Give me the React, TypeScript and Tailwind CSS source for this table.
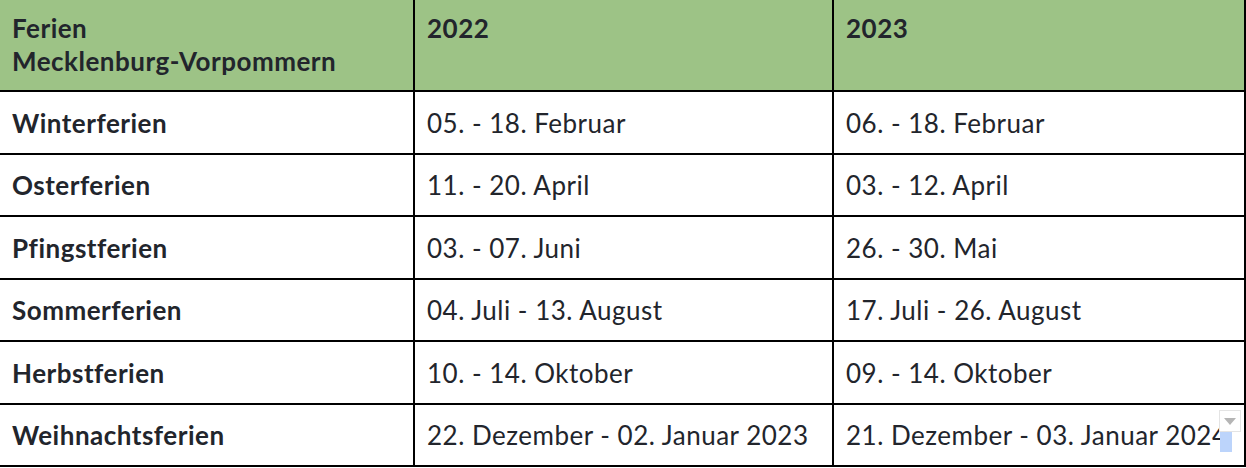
import React from 'react';

const rows = [
  { name: 'Winterferien', y2022: '05. - 18. Februar', y2023: '06. - 18. Februar' },
  { name: 'Osterferien', y2022: '11. - 20. April', y2023: '03. - 12. April' },
  { name: 'Pfingstferien', y2022: '03. - 07. Juni', y2023: '26. - 30. Mai' },
  { name: 'Sommerferien', y2022: '04. Juli - 13. August', y2023: '17. Juli - 26. August' },
  { name: 'Herbstferien', y2022: '10. - 14. Oktober', y2023: '09. - 14. Oktober' },
  { name: 'Weihnachtsferien', y2022: '22. Dezember - 02. Januar 2023', y2023: '21. Dezember - 03. Januar 2024' },
];

export default function App() {
  return (
    <div className="w-[1246px] h-[468px] bg-white overflow-hidden relative text-[#22252c] font-['Lato','Liberation_Sans',sans-serif] text-[26px] leading-[33px] tracking-[0.5px]">
      <div className="grid grid-cols-[415px_419px_412px]">
        {/* header */}
        <div className="h-[92px] bg-[#9dc386] border-r-2 border-b-2 border-black pl-[12px] pt-[12px] font-bold">
          Ferien
          <br />
          Mecklenburg-Vorpommern
        </div>
        <div className="h-[92px] bg-[#9dc386] border-r-2 border-b-2 border-black pl-[12px] pt-[12px] font-bold">
          2022
        </div>
        <div className="h-[92px] bg-[#9dc386] border-r-2 border-b-2 border-black pl-[12px] pt-[12px] font-bold">
          2023
        </div>

        {rows.map((r) => (
          <React.Fragment key={r.name}>
            <div className="h-[62.5px] flex items-center border-r-2 border-b-2 border-black pl-[12px] pt-[2px] font-bold whitespace-nowrap">
              {r.name}
            </div>
            <div className="h-[62.5px] flex items-center border-r-2 border-b-2 border-black pl-[12px] pt-[2px] whitespace-nowrap">
              {r.y2022}
            </div>
            <div className="h-[62.5px] flex items-center border-r-2 border-b-2 border-black pl-[12px] pt-[2px] whitespace-nowrap">
              {r.y2023}
            </div>
          </React.Fragment>
        ))}
      </div>

      {/* little dropdown handle over the last cell */}
      <div className="absolute left-[1219px] top-[410px] w-[22px] h-[22px] bg-white border border-[#e4e4e4] flex items-center justify-center">
        <svg width="12" height="7" viewBox="0 0 12 7">
          <path d="M0 0h12L6 7z" fill="#b5b5b5" />
        </svg>
      </div>
      <div className="absolute left-[1220px] top-[432px] w-[12px] h-[20px] bg-[#bcd4fb]" />
    </div>
  );
}
